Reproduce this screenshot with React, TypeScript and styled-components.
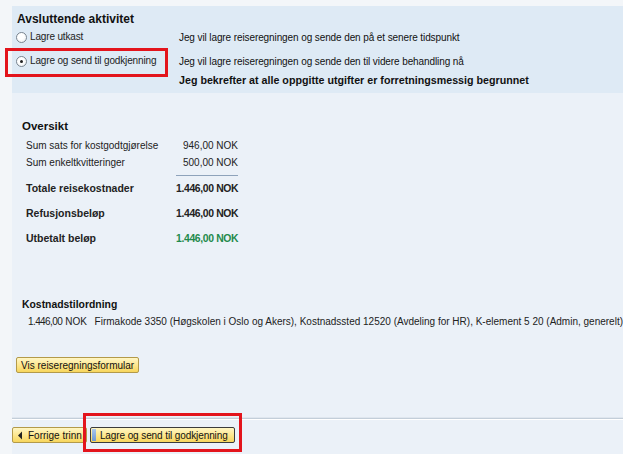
import React from 'react';
import styled, { createGlobalStyle } from 'styled-components';

const GlobalStyle = createGlobalStyle`
  html, body {
    margin: 0;
    padding: 0;
    background: #f3f6f9;
  }
  body {
    font-family: Tahoma, "Liberation Sans", Arial, sans-serif;
    font-size: 10px;
    color: #000;
  }
`;

const Page = styled.div`
  width: 623px;
  height: 454px;
  padding: 6px 0 0 12px;
  box-sizing: border-box;
  overflow: hidden;
`;

const Content = styled.div`
  background: #ebf1f8;
  height: 100%;
  display: flex;
  flex-direction: column;
`;

const ActivitySection = styled.section`
  background: #deeaf5;
  height: 87px;
  box-sizing: border-box;
  padding: 5px 0 0 5px;
`;

const Title = styled.h2<{ $size?: number }>`
  margin: 0;
  font-size: ${(p) => p.$size ?? 12}px;
  line-height: 16px;
  font-weight: bold;
  color: #111;
  white-space: nowrap;
`;

const OptionRow = styled.div<{ $top: number }>`
  display: grid;
  grid-template-columns: 162px 1fr;
  align-items: center;
  height: 18px;
  margin-top: ${(p) => p.$top}px;
`;

const RadioLabel = styled.label<{ $highlight?: boolean }>`
  position: relative;
  display: flex;
  align-items: center;
  gap: 3px;
  height: 12px;
  line-height: 12px;
  font-size: 10px;
  letter-spacing: -0.15px;
  color: #222;
  white-space: nowrap;

  ${(p) =>
    p.$highlight &&
    `
    &::after {
      content: '';
      position: absolute;
      left: -12px;
      top: -7px;
      width: 163px;
      height: 29px;
      box-sizing: border-box;
      border: 3px solid #e3141c;
      pointer-events: none;
    }
  `}
`;

const RadioDot = styled.span<{ $checked?: boolean }>`
  width: 11px;
  height: 11px;
  border-radius: 50%;
  border: 1px solid #7a8590;
  background: radial-gradient(circle at 40% 35%, #ffffff 40%, #e4e8ec 100%);
  box-sizing: border-box;
  display: flex;
  align-items: center;
  justify-content: center;
  margin-left: -1px;
  flex-shrink: 0;

  &::before {
    content: '';
    width: 3px;
    height: 3px;
    border-radius: 50%;
    background: ${(p) => (p.$checked ? '#222' : 'transparent')};
  }
`;

const Description = styled.span<{ $strong?: boolean }>`
  font-size: ${(p) => (p.$strong ? 10.7 : 10)}px;
  letter-spacing: ${(p) => (p.$strong ? 0 : -0.1)}px;
  font-weight: ${(p) => (p.$strong ? 'bold' : 'normal')};
  color: #111;
  white-space: nowrap;
`;

const OverviewSection = styled.section`
  padding: 25px 0 0 10px;
`;

const SummaryTable = styled.div`
  display: grid;
  grid-template-columns: 150px 62px;
  margin: 3px 0 0 4px;
`;

const SummaryLabel = styled.div<{ $bold?: boolean; $h: number }>`
  grid-column: 1;
  height: ${(p) => p.$h}px;
  line-height: ${(p) => p.$h}px;
  font-size: ${(p) => (p.$bold ? 10.5 : 10)}px;
  font-weight: ${(p) => (p.$bold ? 'bold' : 'normal')};
  color: #222;
  white-space: nowrap;
`;

const SummaryValue = styled.div<{ $bold?: boolean; $green?: boolean; $h: number }>`
  grid-column: 2;
  height: ${(p) => p.$h}px;
  line-height: ${(p) => p.$h}px;
  text-align: right;
  font-size: ${(p) => (p.$bold ? 10.4 : 10)}px;
  letter-spacing: ${(p) => (p.$bold ? -0.35 : 0)}px;
  font-weight: ${(p) => (p.$bold ? 'bold' : 'normal')};
  color: ${(p) => (p.$green ? '#1f8a4c' : '#222')};
  white-space: nowrap;
`;

const Divider = styled.div`
  grid-column: 2;
  height: 1px;
  margin: 4px 0 0;
  background: #8ea3bb;
`;

const CostSection = styled.section`
  padding: 46px 0 0 10px;
`;

const CostRow = styled.div`
  display: flex;
  margin: 3px 0 0 6px;
  font-size: 10px;
  color: #222;
  white-space: nowrap;
`;

const CostAmount = styled.span`
  width: 38px;
  letter-spacing: -0.6px;
`;

const CostCurrency = styled.span`
  width: 30px;
`;

const ButtonArea = styled.div`
  padding: 30px 0 0 4px;
`;

const YellowButton = styled.button<{ $primary?: boolean }>`
  position: relative;
  display: inline-flex;
  align-items: center;
  gap: 4px;
  height: 16px;
  padding: 0 ${(p) => (p.$primary ? 6 : 4)}px 0 ${(p) => (p.$primary ? 9 : 4)}px;
  font-family: Tahoma, "Liberation Sans", Arial, sans-serif;
  font-size: 10px;
  letter-spacing: ${(p) => (p.$primary ? -0.1 : 0)}px;
  color: #111;
  border: 1px solid ${(p) => (p.$primary ? '#3b3b3b' : '#b39a4a')};
  border-radius: 2px;
  background: linear-gradient(#fff6c4 0%, #fde790 50%, #f7d65c 100%);
  cursor: pointer;
  box-sizing: border-box;
  white-space: nowrap;

  ${(p) =>
    p.$primary &&
    `
    &::before {
      content: '';
      position: absolute;
      left: 1px;
      top: 1px;
      bottom: 1px;
      width: 4px;
      background: linear-gradient(#a9c6ec, #6f98d2);
    }
  `}
`;

const Footer = styled.div`
  margin-top: auto;
  border-top: 1px solid #c3ced9;
  box-shadow: 0 -1px 0 #dfe6ee, inset 0 1px 0 #ffffff;
  padding: 8px 0 11px 0;
  display: flex;
  gap: 3px;
`;

const Highlight = styled.span`
  position: relative;
  display: inline-flex;

  &::after {
    content: '';
    position: absolute;
    left: -7px;
    top: -14px;
    right: -7px;
    bottom: -9px;
    border: 3px solid #e3141c;
    pointer-events: none;
  }
`;

const BackIcon = () => (
  <svg width="7" height="9" viewBox="0 0 7 9">
    <path d="M5 0.5 L1 4.5 L5 8.5 Z" fill="#222" />
  </svg>
);

export default function App() {
  return (
    <>
      <GlobalStyle />
      <Page>
        <Content>
          <ActivitySection>
            <Title>Avsluttende aktivitet</Title>
            <OptionRow $top={1}>
              <RadioLabel>
                <RadioDot />
                Lagre utkast
              </RadioLabel>
              <Description>Jeg vil lagre reiseregningen og sende den på et senere tidspunkt</Description>
            </OptionRow>
            <OptionRow $top={6}>
              <RadioLabel $highlight>
                <RadioDot $checked />
                Lagre og send til godkjenning
              </RadioLabel>
              <Description>Jeg vil lagre reiseregningen og sende den til videre behandling nå</Description>
            </OptionRow>
            <OptionRow $top={1}>
              <span />
              <Description $strong>Jeg bekrefter at alle oppgitte utgifter er forretningsmessig begrunnet</Description>
            </OptionRow>
          </ActivitySection>

          <OverviewSection>
            <Title $size={11.5}>Oversikt</Title>
            <SummaryTable>
              <SummaryLabel $h={17}>Sum sats for kostgodtgjørelse</SummaryLabel>
              <SummaryValue $h={17}>946,00 NOK</SummaryValue>
              <SummaryLabel $h={17}>Sum enkeltkvitteringer</SummaryLabel>
              <SummaryValue $h={17}>500,00 NOK</SummaryValue>
              <Divider />
              <SummaryLabel $bold $h={25}>Totale reisekostnader</SummaryLabel>
              <SummaryValue $bold $h={25}>1.446,00 NOK</SummaryValue>
              <SummaryLabel $bold $h={25}>Refusjonsbeløp</SummaryLabel>
              <SummaryValue $bold $h={25}>1.446,00 NOK</SummaryValue>
              <SummaryLabel $bold $h={25}>Utbetalt beløp</SummaryLabel>
              <SummaryValue $bold $green $h={25}>1.446,00 NOK</SummaryValue>
            </SummaryTable>
          </OverviewSection>

          <CostSection>
            <Title $size={10.4}>Kostnadstilordning</Title>
            <CostRow>
              <CostAmount>1.446,00</CostAmount>
              <CostCurrency>NOK</CostCurrency>
              <span>
                Firmakode 3350 (Høgskolen i Oslo og Akers), Kostnadssted 12520 (Avdeling for HR), K-element 5 20 (Admin, generelt)
              </span>
            </CostRow>
          </CostSection>

          <ButtonArea>
            <YellowButton>Vis reiseregningsformular</YellowButton>
          </ButtonArea>

          <Footer>
            <YellowButton>
              <BackIcon />
              Forrige trinn
            </YellowButton>
            <Highlight>
              <YellowButton $primary>Lagre og send til godkjenning</YellowButton>
            </Highlight>
          </Footer>
        </Content>
      </Page>
    </>
  );
}
